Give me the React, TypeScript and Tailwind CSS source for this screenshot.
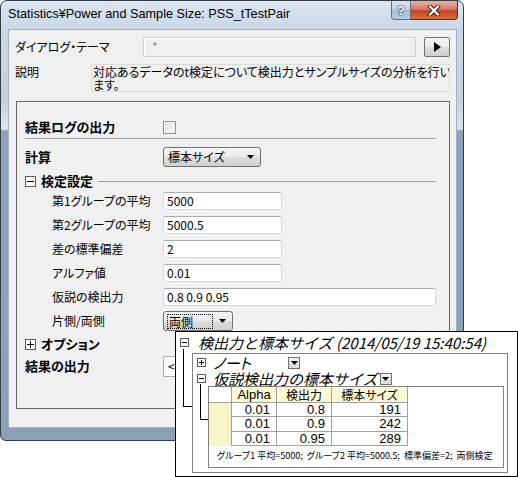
import type { ReactNode } from 'react';

// ツリーの開閉ボックス（⊞ / ⊟）
function TreeToggle({ open, size = 9 }: { open: boolean; size?: number }) {
  const c = size / 2;
  return (
    <svg width={size} height={size} viewBox={`0 0 ${size} ${size}`} className="shrink-0">
      <rect x="0.5" y="0.5" width={size - 1} height={size - 1} fill="white" stroke="#5a5a5a" />
      <path d={`M2 ${Math.floor(c) + 0.5}h${size - 4}`} stroke="black" />
      {!open && <path d={`M${Math.floor(c) + 0.5} 2v${size - 4}`} stroke="black" />}
    </svg>
  );
}

function DownArrow() {
  return (
    <svg width="7" height="4" viewBox="0 0 7 4" className="shrink-0">
      <path d="M0 0h7L3.5 4z" fill="black" />
    </svg>
  );
}

function ComboBox({ width, children, focus }: { width: string; children: ReactNode; focus?: boolean }) {
  return (
    <div
      className={`${width} h-[20px] flex items-center justify-between pl-[3px] pr-[6px] rounded-[3px] border border-[#707070] bg-[linear-gradient(to_bottom,#f4f4f4_0%,#ebebeb_50%,#dddddd_51%,#cfcfcf_100%)]`}
    >
      {focus ? (
        <span className="h-[15px] w-[46px] border border-dotted border-black leading-[13px] pl-[1px]">{children}</span>
      ) : (
        <span className="leading-[14px] pl-[1px]">{children}</span>
      )}
      <DownArrow />
    </div>
  );
}

function TextBox({ value, wide }: { value: string; wide?: boolean }) {
  return (
    <div
      className={`${wide ? 'w-[273px]' : 'w-[119px]'} h-[18px] flex items-center pl-[3px] bg-white rounded-[2px] border border-[#d5d9df] border-t-[#abadb3] leading-[14px]`}
    >
      {value}
    </div>
  );
}

function FieldRow({ label, children }: { label: string; children: ReactNode }) {
  return (
    <div className="flex items-center h-[24px]">
      <span className="w-[138px] pl-[27px] whitespace-nowrap leading-[16px]">{label}</span>
      {children}
    </div>
  );
}

function TitleBar() {
  return (
    <div className="flex h-[28px] shrink-0">
      <div className="flex-1 self-center pl-[7px] pb-[1px] font-['Liberation_Sans',sans-serif] text-[12.7px] text-black whitespace-nowrap [font-feature-settings:normal]">
        Statistics¥Power and Sample Size: PSS_tTestPair
      </div>
      <div className="flex self-start mr-[5px]">
        <div className="w-[20px] h-[19px] flex items-center justify-center rounded-bl-[4px] border border-t-0 border-[#5f7185] bg-[linear-gradient(to_bottom,#dbe6f1_0%,#c3d3e4_45%,#a7bbd1_55%,#b9cde2_100%)]">
          <span className="font-['Liberation_Sans',sans-serif] font-bold text-[13px] text-white leading-none [text-shadow:0_0_1px_#2d3b4c,0_0_1px_#2d3b4c,0_0_2px_#2d3b4c]">
            ?
          </span>
        </div>
        <div className="w-[47px] h-[19px] flex items-center justify-center rounded-br-[4px] border border-t-0 border-l-0 border-[#5a2b22] bg-[linear-gradient(to_bottom,#eab0a2_0%,#d77c68_45%,#c5422c_55%,#d9702e_100%)]">
          <svg width="14" height="11" viewBox="0 0 14 11">
            <path d="M3 1.5 11 9.5M11 1.5 3 9.5" stroke="#3b1d16" strokeWidth="4" strokeLinecap="square" />
            <path d="M3 1.5 11 9.5M11 1.5 3 9.5" stroke="white" strokeWidth="2.2" strokeLinecap="square" />
          </svg>
        </div>
      </div>
    </div>
  );
}

function DialogWindow() {
  return (
    <div className="absolute left-0 top-0 w-[464px] h-[441px] flex flex-col rounded-t-[7px] rounded-b-[6px] border border-[#353c45] bg-[linear-gradient(to_bottom,#dce6f0_0px,#c9d7e6_28px,#c3d1df_100px,#dde6ee_128px,#8ea3bb_130px,#8aa0b9_100%)]">
      <TitleBar />
      <div className="ml-[7px] mr-[6px] h-[399px] border border-[#9fb0c2] bg-[#f0f0f0]">
        {/* ダイアログ・テーマ */}
        <div className="flex items-center mt-[7px] h-[20px]">
          <span className="w-[134px] pl-[6px] whitespace-nowrap">ダイアログ・テーマ</span>
          <div className="w-[273px] h-[20px] flex items-center pl-[8px] border border-[#cfcfcf] bg-[#f0f0f0] shadow-[inset_1px_1px_0_#ffffff] text-[#8a8a8a]">
            *
          </div>
          <div className="ml-[8px] w-[26px] h-[20px] flex items-center justify-center rounded-[2px] border border-[#707070] bg-[linear-gradient(to_bottom,#f4f4f4_0%,#ebebeb_50%,#dddddd_51%,#cfcfcf_100%)]">
            <svg width="7" height="10" viewBox="0 0 7 10">
              <path d="M0 0l7 5-7 5z" fill="black" />
            </svg>
          </div>
        </div>

        {/* 説明 */}
        <div className="flex mt-[7px] h-[28px]">
          <span className="w-[82px] pl-[6px] pt-[1px] leading-[14px]">説明</span>
          <div className="w-[359px] h-[28px] border border-[#dcdcdc] pl-[1px] overflow-hidden">
            <div className="whitespace-nowrap leading-[13px] h-[13px]">対応あるデータのt検定について検出力とサンプルサイズの分析を行い</div>
            <div className="whitespace-nowrap leading-[13px] h-[13px]">ます。</div>
          </div>
        </div>

        {/* 設定グループ */}
        <div className="ml-[7px] mt-[9px] w-[434px] h-[308px] border border-[#676767] pl-[8px] pr-[13px]">
          <div className="flex items-center mt-[14px] h-[22px]">
            <span className="w-[138px] font-bold text-[13px]">結果ログの出力</span>
            <div className="w-[13px] h-[13px] border border-[#8f8f8f] bg-[linear-gradient(135deg,#dcdcdc_0%,#fbfbfb_100%)] shadow-[inset_0_0_0_1px_#f4f4f4]" />
          </div>
          <div className="h-px bg-[#a0a0a0]" />

          <div className="flex items-center mt-[8px] h-[20px]">
            <span className="w-[138px] font-bold text-[13px]">計算</span>
            <ComboBox width="w-[98px]">標本サイズ</ComboBox>
          </div>

          <div className="flex items-center mt-[6px] h-[16px]">
            <TreeToggle open size={11} />
            <span className="ml-[5px] font-bold text-[13px] whitespace-nowrap">検定設定</span>
            <div className="flex-1 ml-[5px] h-px bg-[#a0a0a0]" />
          </div>

          <FieldRow label="第1グループの平均">
            <TextBox value="5000" />
          </FieldRow>
          <FieldRow label="第2グループの平均">
            <TextBox value="5000.5" />
          </FieldRow>
          <FieldRow label="差の標準偏差">
            <TextBox value="2" />
          </FieldRow>
          <FieldRow label="アルファ値">
            <TextBox value="0.01" />
          </FieldRow>
          <FieldRow label="仮説の検出力">
            <TextBox value="0.8 0.9 0.95" wide />
          </FieldRow>
          <FieldRow label="片側/両側">
            <ComboBox width="w-[70px]" focus>
              両側
            </ComboBox>
          </FieldRow>

          <div className="flex items-center h-[22px]">
            <TreeToggle open={false} size={11} />
            <span className="ml-[5px] font-bold text-[13px]">オプション</span>
          </div>
          <div className="flex items-center h-[22px]">
            <span className="w-[138px] font-bold text-[13px]">結果の出力</span>
            <div className="w-[160px] h-[21px] flex items-center pl-[4px] border border-[#abadb3] bg-white">&lt;新規&gt;</div>
          </div>
        </div>
      </div>
    </div>
  );
}

function MiniDrop() {
  return (
    <div className="w-[12px] h-[12px] flex items-center justify-center border border-[#6f6f6f] bg-[linear-gradient(to_bottom,#f6f6f6,#d8d8d8)]">
      <DownArrow />
    </div>
  );
}

const rows = [
  ['0.01', '0.8', '191'],
  ['0.01', '0.9', '242'],
  ['0.01', '0.95', '289'],
];
const rowHeights = ['h-[14px]', 'h-[15px]', 'h-[14px]'];

function ResultOverlay() {
  return (
    <div className="absolute left-[175px] top-[331px] w-[343px] h-[146px] border border-black bg-white">
      {/* ツリーの接続線 */}
      <div className="absolute left-[7px] top-[17px] w-[9px] h-[58px] border-l border-b border-black" />

      <div className="flex items-center h-[21px] pl-[4px]">
        <TreeToggle open />
        <span className="ml-[9px] italic text-[15px] leading-[18px] whitespace-nowrap [font-feature-settings:normal]">
          検出力と標本サイズ (2014/05/19 15:40:54)
        </span>
      </div>

      <div className="relative ml-[16px] w-[316px] h-[120px] border border-[#808080]">
        <div className="absolute left-[7px] top-[30px] w-[8px] h-[36px] border-l border-b border-black" />

        <div className="flex items-center h-[17px] pl-[4px]">
          <TreeToggle open={false} />
          <span className="ml-[7px] w-[75px] italic text-[15px] leading-[16px]">ノート</span>
          <MiniDrop />
        </div>
        <div className="flex items-center h-[15px] pl-[4px]">
          <TreeToggle open />
          <span className="ml-[7px] italic text-[15px] leading-[15px] whitespace-nowrap [font-feature-settings:normal]">
            仮説検出力の標本サイズ
          </span>
          <span className="ml-[2px]">
            <MiniDrop />
          </span>
        </div>

        <div className="ml-[15px] w-[296px] h-[82px] border border-[#808080]">
          <div className="grid grid-cols-[22px_46px_55px_76px] w-[199px] font-['Liberation_Sans_Narrow','Liberation_Sans',sans-serif] text-[13px] leading-[14px]">
            <div className="h-[16px] border-b border-[#a0a0a0] bg-white" />
            <div className="h-[16px] flex items-center justify-center border-l border-r border-b border-[#a0a0a0] bg-[#fcf8d4]">Alpha</div>
            <div className="h-[16px] flex items-center justify-center border-r border-b border-[#a0a0a0] bg-[#fcf8d4] font-['Noto_Sans_CJK_JP',sans-serif] text-[12px] [font-feature-settings:'palt']">
              検出力
            </div>
            <div className="h-[16px] flex items-center justify-center border-r border-b border-[#a0a0a0] bg-[#fcf8d4] font-['Noto_Sans_CJK_JP',sans-serif] text-[12px] [font-feature-settings:'palt']">
              標本サイズ
            </div>
            {rows.map((r, i) => (
              <div key={i} className="contents">
                <div className={`${rowHeights[i]} bg-[#f8f4c9]`} />
                {r.map((v, j) => (
                  <div
                    key={j}
                    className={`${rowHeights[i]} flex items-center justify-end pr-[6px] border-r border-b border-[#a0a0a0] ${j === 0 ? 'border-l' : ''}`}
                  >
                    {v}
                  </div>
                ))}
              </div>
            ))}
          </div>
          <div className="mt-[3px] pl-[8px] h-[14px] flex items-center text-[9px] leading-[12px] whitespace-nowrap">
            グループ1 平均=5000;&nbsp; グループ2 平均=5000.5;&nbsp; 標準偏差=2;&nbsp; 両側検定
          </div>
        </div>
      </div>
    </div>
  );
}

export default function App() {
  return (
    <div className="relative w-[518px] h-[477px] bg-white overflow-hidden font-['Noto_Sans_CJK_JP',sans-serif] text-[12px] text-black [font-feature-settings:'palt']">
      <DialogWindow />
      <ResultOverlay />
    </div>
  );
}
